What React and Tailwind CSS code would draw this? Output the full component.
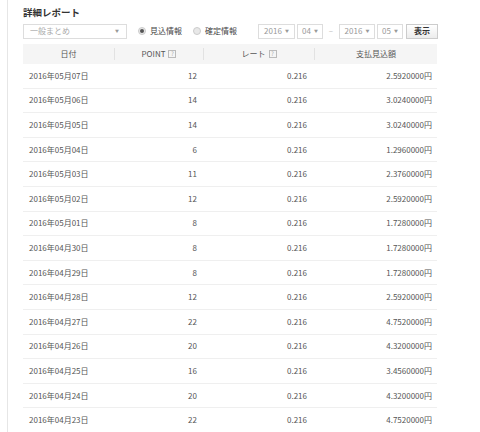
import React from "react"

const rows = [
  ["2016年05月07日", 12, "2.5920000円"],
  ["2016年05月06日", 14, "3.0240000円"],
  ["2016年05月05日", 14, "3.0240000円"],
  ["2016年05月04日", 6, "1.2960000円"],
  ["2016年05月03日", 11, "2.3760000円"],
  ["2016年05月02日", 12, "2.5920000円"],
  ["2016年05月01日", 8, "1.7280000円"],
  ["2016年04月30日", 8, "1.7280000円"],
  ["2016年04月29日", 8, "1.7280000円"],
  ["2016年04月28日", 12, "2.5920000円"],
  ["2016年04月27日", 22, "4.7520000円"],
  ["2016年04月26日", 20, "4.3200000円"],
  ["2016年04月25日", 16, "3.4560000円"],
  ["2016年04月24日", 20, "4.3200000円"],
  ["2016年04月23日", 22, "4.7520000円"],
]

const font = { fontFamily: '"Noto Sans CJK JP", "Noto Sans", sans-serif' }

function Help() {
  return (
    <span className="ml-[3px] inline-flex h-[8px] w-[8px] items-center justify-center border border-[#bbb] text-[6px] leading-none text-[#aaa]">
      ?
    </span>
  )
}

function Caret() {
  return <span className="ml-[3px] text-[4px] text-[#999]">▼</span>
}

function DateSelect({ value, w }) {
  return (
    <div className={`flex h-[15px] items-center justify-center border border-[#ddd] bg-white text-[8px] text-[#999] ${w}`}>
      {value}
      <Caret />
    </div>
  )
}

function Radio({ on, label }) {
  return (
    <label className="flex items-center gap-[4px] text-[8px] text-[#444]">
      <span className="flex h-[8px] w-[8px] items-center justify-center rounded-full border border-[#ccc] bg-[#e8e8e8]">
        {on && <span className="h-[4px] w-[4px] rounded-full bg-[#555]" />}
      </span>
      {label}
    </label>
  )
}

export default function App() {
  return (
    <div className="flex min-h-[432px] bg-white" style={font}>
      <div className="ml-[7px] w-px bg-[#e6e6e6]" />
      <div className="ml-[15px] w-[415px] pt-[6px]">
        <h2 className="text-[9.5px] font-bold leading-[13px] text-[#333]">詳細レポート</h2>

        <div className="mt-[4px] flex h-[16px] items-center">
          <div className="flex h-[15px] w-[104px] items-center justify-between border border-[#ddd] bg-white pl-[6px] pr-[7px] text-[8px] text-[#aaa]">
            一般まとめ
            <span className="text-[4px] text-[#999]">▼</span>
          </div>
          <div className="ml-[11px] flex items-center gap-[11px]">
            <Radio on label="見込情報" />
            <Radio label="確定情報" />
          </div>
          <div className="ml-auto flex items-center">
            <DateSelect value="2016" w="w-[37px]" />
            <div className="ml-[2px]">
              <DateSelect value="04" w="w-[26px]" />
            </div>
            <span className="mx-[4px] w-[8px] text-center text-[8px] text-[#bbb]">–</span>
            <DateSelect value="2016" w="w-[36px]" />
            <div className="ml-[2px]">
              <DateSelect value="05" w="w-[26px]" />
            </div>
            <button className="ml-[3px] h-[15px] w-[32px] border border-[#ccc] bg-gradient-to-b from-white to-[#ececec] text-[8px] font-bold text-[#333]">
              表示
            </button>
          </div>
        </div>

        <div className="mt-[5px] w-[414px]">
          <div className="flex h-[20px] items-center bg-[#f5f5f5] text-[8px] text-[#555]">
            <div className="flex w-[91px] justify-center">日付</div>
            <div className="h-[12px] w-px bg-[#e2e2e2]" />
            <div className="flex w-[88px] items-center justify-center">
              POINT
              <Help />
            </div>
            <div className="h-[12px] w-px bg-[#e2e2e2]" />
            <div className="flex w-[110px] items-center justify-center">
              レート
              <Help />
            </div>
            <div className="h-[12px] w-px bg-[#e2e2e2]" />
            <div className="flex flex-1 justify-center">支払見込額</div>
          </div>

          {rows.map(([date, pt, amt]) => (
            <div
              key={date}
              className="flex h-[24.6px] items-center border-b border-[#efefef] text-[8px] text-[#555]"
            >
              <div className="w-[91px] pl-[6px]">{date}</div>
              <div className="w-[89px] pr-[6px] text-right">{pt}</div>
              <div className="w-[111px] pr-[7px] text-right">0.216</div>
              <div className="flex-1 pr-[5px] text-right">{amt}</div>
            </div>
          ))}
        </div>
      </div>
    </div>
  )
}
